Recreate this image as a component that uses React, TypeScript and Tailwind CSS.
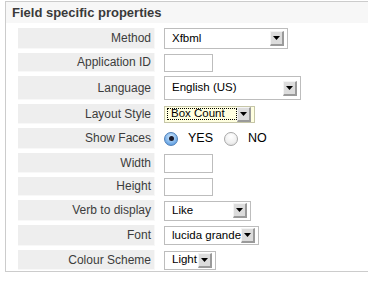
const FONT = { fontFamily: '"Liberation Sans", Arial, sans-serif' };

function Arrow() {
  return (
    <span className="flex h-[15px] w-[14px] shrink-0 items-center justify-center border-r-2 border-b-2 border-t border-l border-r-[#9a9a9a] border-b-[#9a9a9a] border-t-[#f4f4f4] border-l-[#f4f4f4] bg-[#dcdcdc]">
      <svg width="7" height="4" viewBox="0 0 7 4">
        <polygon points="0,0 7,0 3.5,4" fill="#000" />
      </svg>
    </span>
  );
}

type SelectProps = { value: string; width: number; height: number; focused?: boolean };

function Select({ value, width, height, focused }: SelectProps) {
  return (
    <div
      className={
        focused
          ? "flex items-center justify-between border border-[#c6c6a8] bg-[#ffffe0] pl-[2px] pr-[3px]"
          : "flex items-center justify-between border border-[#bdbdbd] bg-white pl-[7px] pr-[3px]"
      }
      style={{ width, height }}
    >
      {focused ? (
        <span className="flex h-[12px] w-[71px] items-center whitespace-nowrap border border-dotted border-black pl-[3px] text-[11.5px] text-black">
          {value}
        </span>
      ) : (
        <span className="whitespace-nowrap text-[11.5px] text-black">{value}</span>
      )}
      <Arrow />
    </div>
  );
}

function TextBox({ height }: { height: number }) {
  return <div className="w-[49px] border border-[#bdbdbd] bg-white" style={{ height }} />;
}

function Radio({ checked }: { checked?: boolean }) {
  return checked ? (
    <span className="flex h-[14px] w-[14px] shrink-0 items-center justify-center rounded-full border border-[#4f7fb8] bg-[radial-gradient(circle_at_50%_35%,#d6ecff,#6ea9e6_70%,#3f7fcf)]">
      <span className="block h-[5px] w-[5px] rounded-full bg-[#1a1a2a]" />
    </span>
  ) : (
    <span className="block h-[14px] w-[14px] shrink-0 rounded-full border border-[#a8a8a8] bg-[radial-gradient(circle_at_50%_30%,#ffffff,#f0f0f0_60%,#d4d4d4)]" />
  );
}

type Row = { label: string; h: number; field: React.ReactNode };

const rows: Row[] = [
  { label: "Method", h: 21, field: <Select value="Xfbml" width={124} height={21} /> },
  { label: "Application ID", h: 19, field: <TextBox height={18} /> },
  { label: "Language", h: 24, field: <Select value="English (US)" width={137} height={24} /> },
  { label: "Layout Style", h: 20, field: <Select value="Box Count" width={91} height={17} focused /> },
  {
    label: "Show Faces",
    h: 21,
    field: (
      <div className="flex items-center text-[12.5px] text-black">
        <Radio checked />
        <span className="ml-[10px]">YES</span>
        <span className="ml-[11px] flex items-center">
          <Radio />
        </span>
        <span className="ml-[10px]">NO</span>
      </div>
    ),
  },
  { label: "Width", h: 20, field: <TextBox height={19} /> },
  { label: "Height", h: 19, field: <TextBox height={18} /> },
  { label: "Verb to display", h: 21, field: <Select value="Like" width={87} height={20} /> },
  { label: "Font", h: 21, field: <Select value="lucida grande" width={95} height={19} /> },
  { label: "Colour Scheme", h: 20, field: <Select value="Light" width={52} height={19} /> },
];

export default function App() {
  return (
    <div className="h-[294px] w-[368px] overflow-hidden bg-white" style={FONT}>
      <div className="ml-[5px] mt-[1px] w-[390px] border border-[#cccccc] pb-[1px]">
        <div className="flex h-[21px] items-center bg-[#f7f7f7] pl-[6px] text-[13px] font-bold text-[#3a3a3a]">
          Field specific properties
        </div>
        <div className="flex flex-col gap-[4px] pt-[5px]">
          {rows.map((r) => (
            <div key={r.label} className="flex items-center" style={{ height: r.h }}>
              <div className="ml-[12px] flex h-full w-[137px] items-center justify-end border-b border-r border-b-[#f8f8f8] border-r-[#f8f8f8] bg-[#eeeeee] pr-[3px] text-[12px] text-[#3c3c3c]">
                {r.label}
              </div>
              <div className="ml-[9px] flex items-center">{r.field}</div>
            </div>
          ))}
        </div>
      </div>
    </div>
  );
}
